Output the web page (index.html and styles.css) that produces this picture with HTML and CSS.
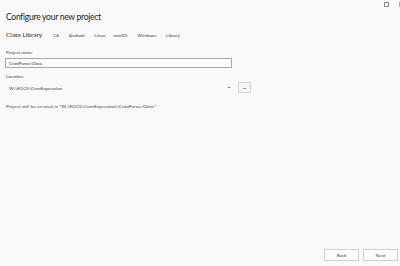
FILE: index.html
```html
<html>
<head>
	<link rel="stylesheet" href="styles.css">
</head>
<body>
	<div class='window'>
		<div class='titlebar'>
			<span class='restore'></span>
			<span class='more'></span>
		</div>
		<div class='page'>
			<div class='heading'>Configure your new project</div>
			<div class='template'>
				<span class='name'>Class Library</span>
				<span class='tag'>C#</span>
				<span class='tag'>Android</span>
				<span class='tag'>Linux</span>
				<span class='tag'>macOS</span>
				<span class='tag'>Windows</span>
				<span class='tag'>Library</span>
			</div>
			<div class='label first'>Project name</div>
			<div class='textbox'>CronParser.Data</div>
			<div class='label'>Location</div>
			<div class='location'>
				<div class='path'>W:\EOCS\CronExpression</div>
				<div class='caret'></div>
				<div class='browse'><span></span></div>
			</div>
			<div class='note'>Project will be created in "W:\EOCS\CronExpression\CronParser.Data\"</div>
		</div>
		<div class='footer'>
			<div class='btn'>Back</div>
			<div class='btn primary'>Next</div>
		</div>
	</div>
</body>
</html>
```

FILE: styles.css
```css
body {
	margin: 0;
	font-family: Lato, 'Noto Sans', sans-serif;
	background-color: #f9f9f9;
	color: #1e1e1e;
}

.window {
	height: 266px;
	display: flex;
	flex-flow: column;
}

.titlebar {
	height: 8px;
	display: flex;
	justify-content: flex-end;
	align-items: flex-start;
	gap: 10px;
	padding-top: 2px;
}

.restore {
	width: 3px;
	height: 3px;
	border: 1px solid #8a8a8a;
}

.more {
	width: 1px;
	height: 5px;
	background: #b0b0b0;
}

.page {
	flex: 1;
	padding: 0 6px;
}

.heading {
	font-size: 8.6px;
	line-height: 14px;
	letter-spacing: -0.3px;
	margin-top: 0;
}

.template {
	display: flex;
	align-items: baseline;
	margin-top: 7px;
	height: 12px;
}

.name {
	font-size: 6.5px;
	margin-right: 11px;
}

.tag {
	font-size: 4.5px;
	color: #444;
}

.tag:nth-child(2) { margin-right: 10px; }
.tag:nth-child(3) { margin-right: 10px; }
.tag:nth-child(4) { margin-right: 8px; }
.tag:nth-child(5) { margin-right: 10px; }
.tag:nth-child(6) { margin-right: 10px; }

.label {
	font-size: 4.6px;
	line-height: 7px;
	margin-top: 5px;
	color: #444;
}

.label.first {
	margin-top: 6px;
}

.textbox {
	width: 222px;
	height: 8px;
	margin-top: 2px;
	margin-left: -1px;
	border: 1px solid #a8a8a8;
	background: #fbfbfb;
	font-size: 4.6px;
	line-height: 8px;
	padding-left: 3px;
	color: #333;
}

.location {
	display: flex;
	align-items: center;
	margin-top: 2px;
	height: 11px;
}

.path {
	font-size: 4.6px;
	padding-left: 3px;
	width: 219px;
	color: #444;
}

.caret {
	width: 2px;
	height: 1px;
	background: #777;
	margin-right: 8px;
}

.browse {
	width: 11px;
	height: 9px;
	border: 1px solid #d5d5d5;
	background: #f5f5f5;
	display: flex;
	justify-content: center;
	align-items: flex-end;
}

.browse span {
	width: 3px;
	height: 1px;
	background: #999;
	margin-bottom: 3px;
}

.note {
	font-size: 4.6px;
	letter-spacing: 0.1px;
	margin-top: 10px;
	color: #444;
}

.footer {
	display: flex;
	justify-content: flex-end;
	gap: 4px;
	padding: 0 2px 5px 0;
}

.btn {
	width: 33px;
	height: 10px;
	border: 1px solid #d0d0d0;
	background: #fdfdfd;
	font-size: 4.6px;
	line-height: 10px;
	text-align: center;
	color: #444;
}

.primary {
	border-color: #b9d4ee;
}
```
